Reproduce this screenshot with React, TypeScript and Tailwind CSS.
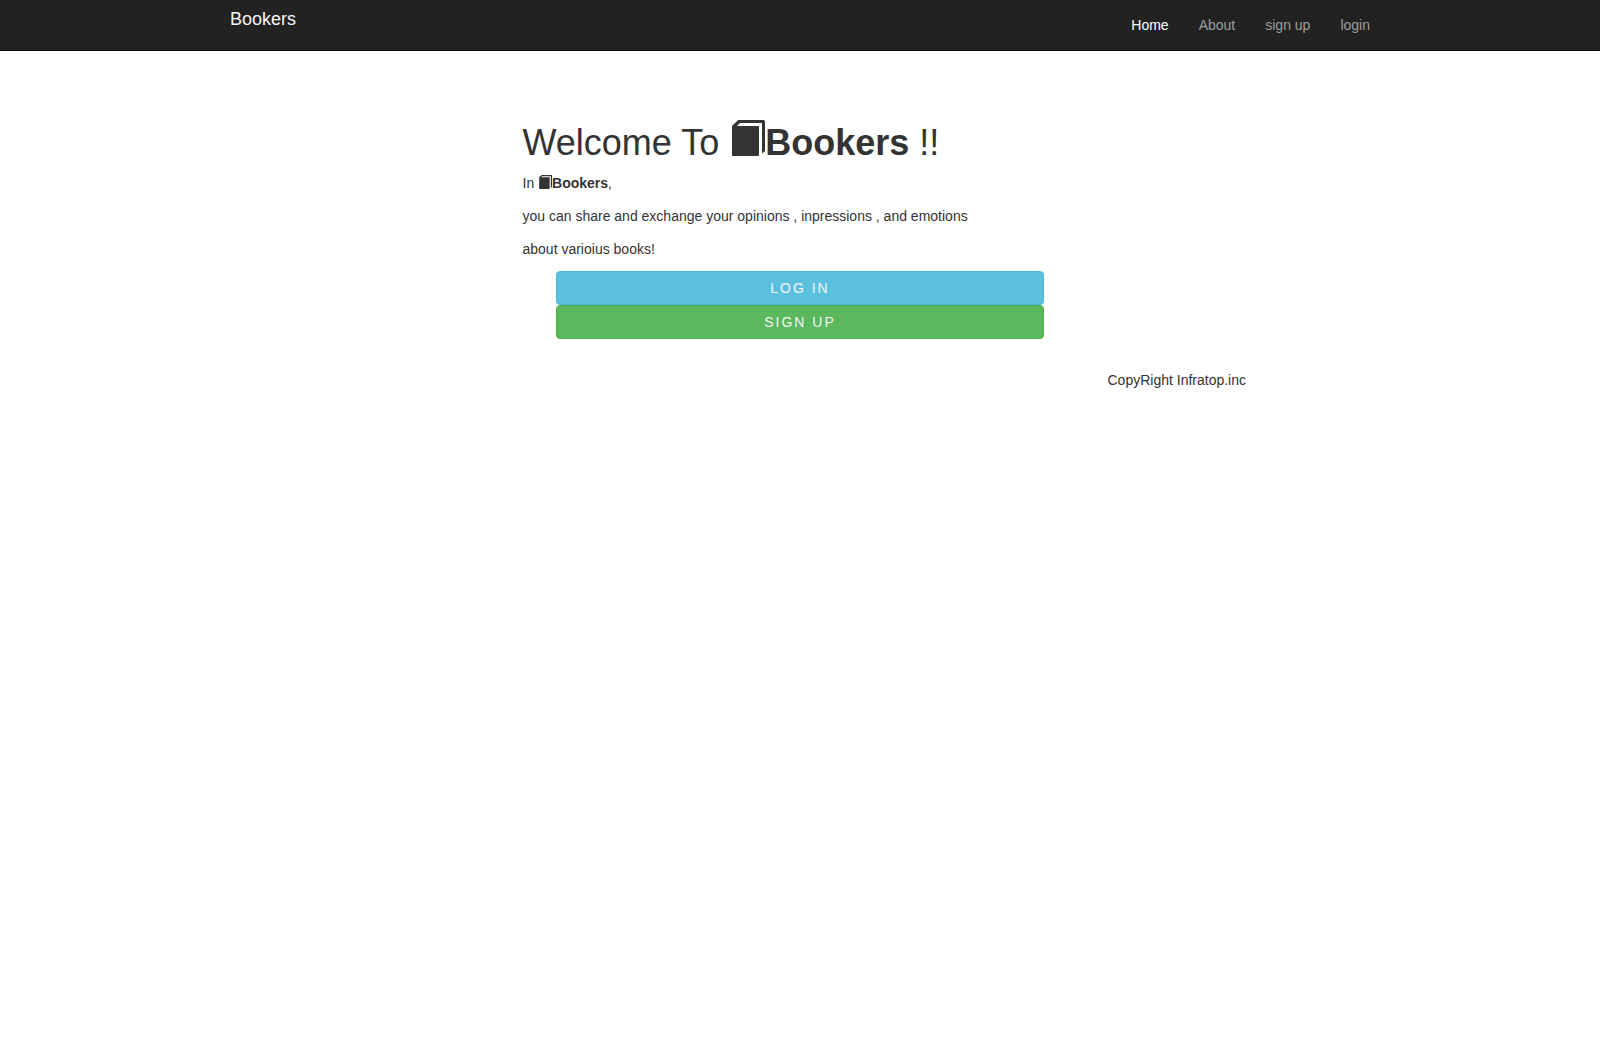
type IconProps = { className: string };

function BookIcon({ className }: IconProps) {
  return (
    <svg viewBox="-3 0 36 36" fill="currentColor" aria-hidden="true" className={className}>
      <path d="M0 6L5.5 .5Q6 0 7 0H31.5Q33 0 33 1.5V30.5Q33 31 32.500 31.500L30 33.500V3H8L5 6H26.500Q27 6 27 6.500V35Q27 36 26 36H1Q0 36 0 35Z" />
    </svg>
  );
}

const navLinks = [
  { label: "Home", href: "#home", active: true },
  { label: "About", href: "#about", active: false },
  { label: "sign up", href: "#sign-up", active: false },
  { label: "login", href: "#login", active: false },
];

export default function App() {
  return (
    <div className="bg-white font-['Liberation_Sans',Arial,sans-serif] text-sm text-[#333333]">
      <header className="border-b border-[#080808] bg-[#222222]">
        <div className="mx-auto flex max-w-[1170px] items-start justify-between">
          <a href="#home" className="pt-[9px] pl-[15px] text-lg leading-5 text-[#f5f5f5]">
            Bookers
          </a>
          <nav aria-label="Main">
            <ul className="flex">
              {navLinks.map((link) => (
                <li key={link.label}>
                  <a
                    href={link.href}
                    aria-current={link.active ? "page" : undefined}
                    className={
                      link.active
                        ? "block p-[15px] leading-5 text-white"
                        : "block p-[15px] leading-5 text-[#9d9d9d] hover:text-white"
                    }
                  >
                    {link.label}
                  </a>
                </li>
              ))}
            </ul>
          </nav>
        </div>
      </header>

      <div className="mx-auto max-w-[1170px]">
        <main className="mx-auto w-1/2 pt-[69px]">
          <div className="px-[15px]">
            <h1 className="mb-[9px] text-4xl leading-10">
              Welcome To{" "}
              <strong>
                <BookIcon className="inline size-9 align-[-1px]" />
                Bookers
              </strong>{" "}
              !!
            </h1>
            <div className="space-y-2.5 leading-[23px]">
              <p>
                In{" "}
                <strong>
                  <BookIcon className="inline size-3.5 align-[-1px]" />
                  Bookers
                </strong>
                ,
              </p>
              <p>you can share and exchange your opinions , inpressions , and emotions</p>
              <p>about varioius books!</p>
            </div>
          </div>
          <div className="mx-auto mt-2.5 flex w-10/12 flex-col text-center leading-5 tracking-[2px] text-[#f5f5f5]">
            <a href="#login" className="rounded border border-[#46b8da] bg-[#5bc0de] px-3 py-1.5">
              LOG IN
            </a>
            <a href="#sign-up" className="rounded border border-[#4cae4c] bg-[#5cb85c] px-3 py-1.5">
              SIGN UP
            </a>
          </div>
        </main>
        <footer className="mt-[30px] ml-[75%] px-[15px] leading-[23px]">
          <p>CopyRight Infratop.inc</p>
        </footer>
      </div>
    </div>
  );
}
